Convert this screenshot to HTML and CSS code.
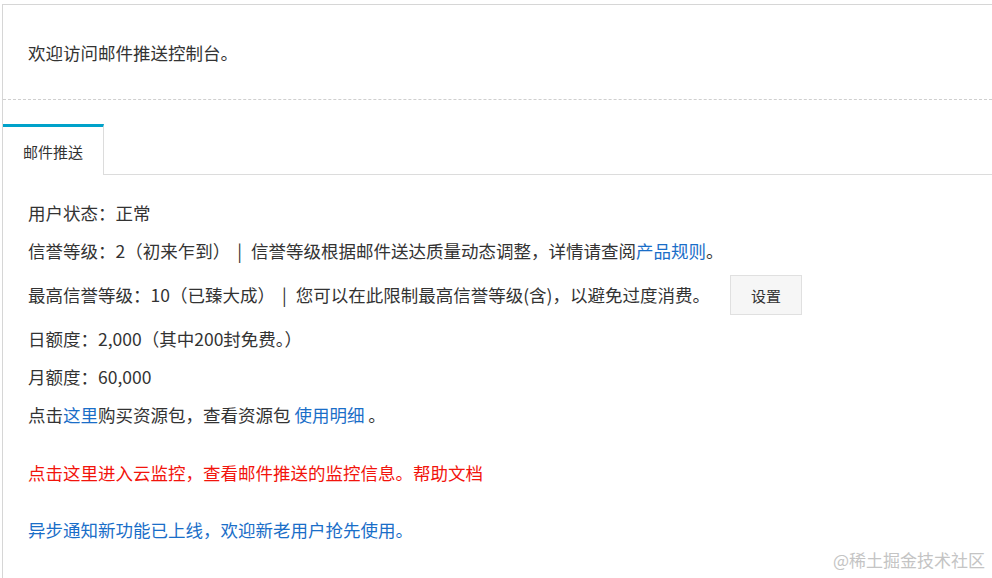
FILE: index.html
```html
<!DOCTYPE html>
<html lang="zh-CN">
<head>
<meta charset="utf-8">
<title>邮件推送控制台</title>
<link rel="stylesheet" href="styles.css">
</head>
<body>
<div class="panel">
  <div class="header">欢迎访问邮件推送控制台。</div>
  <div class="tabs">
    <div class="tab">邮件推送</div>
    <div class="tab-fill"></div>
  </div>
  <div class="content">
    <div class="row">用户状态：正常</div>
    <div class="row">信誉等级：2（初来乍到）<span class="sep">|</span>信誉等级根据邮件送达质量动态调整，详情请查阅<a class="link">产品规则</a>。</div>
    <div class="row row-btn"><span>最高信誉等级：10（已臻大成）<span class="sep">|</span>您可以在此限制最高信誉等级(含)，以避免过度消费。</span><button class="btn">设置</button></div>
    <div class="row">日额度：2,000（其中200封免费。）</div>
    <div class="row">月额度：60,000</div>
    <div class="row">点击<a class="link">这里</a>购买资源包，查看资源包 <a class="link">使用明细</a> 。</div>
    <div class="row row-red">点击这里进入云监控，查看邮件推送的监控信息。帮助文档</div>
    <div class="row row-blue">异步通知新功能已上线，欢迎新老用户抢先使用。</div>
  </div>
</div>
<div class="watermark">@稀土掘金技术社区</div>
</body>
</html>
```
FILE: styles.css
```css
html, body {
  margin: 0;
  padding: 0;
  background: #fff;
}
body {
  font-family: "Noto Sans CJK SC", "Noto Sans", sans-serif;
  color: #333;
  height: 578px;
  overflow: hidden;
  position: relative;
}
.panel {
  margin: 4px 0 0 2px;
  height: 574px;
  box-sizing: border-box;
  border-top: 1px solid #d6d6d6;
  border-left: 1px solid #d6d6d6;
}
.header {
  height: 94px;
  display: flex;
  align-items: center;
  padding-left: 25px;
  font-size: 17.5px;
  border-bottom: 1px dashed #cfcfcf;
}
.tabs {
  display: flex;
  height: 51px;
  margin-top: 24px;
}
.tab {
  width: 100px;
  border-top: 3px solid #00a2ca;
  border-right: 1px solid #dcdcdc;
  display: flex;
  align-items: center;
  justify-content: center;
  font-size: 15px;
  color: #333;
}
.tab-fill {
  flex: 1;
  border-bottom: 1px solid #dcdcdc;
}
.content {
  padding: 19px 0 0 25px;
  font-size: 17.5px;
}
.row {
  height: 38px;
  line-height: 38px;
  white-space: nowrap;
}
.sep {
  margin: 0 9px 0 7px;
}
.row-btn {
  height: 50px;
  display: flex;
  align-items: center;
}
.link {
  color: #1a6ec8;
  text-decoration: none;
}
.btn {
  margin-left: 20px;
  width: 72px;
  height: 40px;
  line-height: normal;
  background: #f6f6f6;
  border: 1px solid #e0e0e0;
  font-family: inherit;
  font-size: 15px;
  color: #333;
  padding: 0;
}
.row-red {
  color: #f2140c;
  margin-top: 20px;
}
.row-blue {
  color: #1a6ec8;
  margin-top: 19px;
}
.watermark {
  position: absolute;
  right: 7px;
  bottom: 6px;
  font-size: 17px;
  color: #c4c4c4;
}
```
